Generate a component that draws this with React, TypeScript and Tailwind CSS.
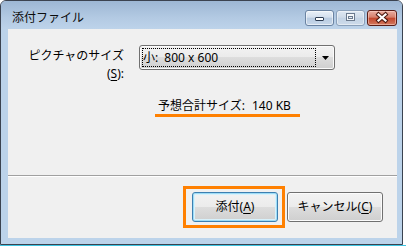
import React from "react";

const FONT = { fontFamily: '"Noto Sans", "Noto Sans CJK JP", sans-serif' };

function MinGlyph() {
  return (
    <svg className="absolute left-[-1px] top-[-1px]" width="29" height="16" viewBox="0 0 29 16">
      <rect x="10.5" y="7.5" width="8" height="3" fill="#ffffff" stroke="#2f3f55" strokeWidth="1" rx="0.5" />
    </svg>
  );
}

function MaxGlyph() {
  return (
    <svg className="absolute left-[-1px] top-[-1px]" width="29" height="16" viewBox="0 0 29 16">
      <rect x="10" y="3" width="9" height="8" fill="#6b7a8e" />
      <rect x="11" y="4" width="7" height="6" fill="#f4f7fa" />
      <rect x="12" y="6" width="5" height="3" fill="#6b7a8e" />
      <rect x="13" y="7" width="3" height="1" fill="#e8eef5" />
    </svg>
  );
}

function CloseGlyph() {
  return (
    <svg className="absolute left-[-1px] top-[-1px]" width="30" height="16" viewBox="0 0 30 16">
      <g strokeLinecap="square">
        <line x1="11.5" y1="4.5" x2="18.5" y2="10.5" stroke="#4a1810" strokeWidth="4.2" />
        <line x1="18.5" y1="4.5" x2="11.5" y2="10.5" stroke="#4a1810" strokeWidth="4.2" />
        <line x1="11.5" y1="4.5" x2="18.5" y2="10.5" stroke="#ffffff" strokeWidth="2.2" />
        <line x1="18.5" y1="4.5" x2="11.5" y2="10.5" stroke="#ffffff" strokeWidth="2.2" />
      </g>
    </svg>
  );
}

export default function App() {
  return (
    <div className="w-[406px] h-[246px] bg-white flex flex-col" style={FONT}>
      <div className="w-[403px] h-[245px] rounded-t-[6px] border border-[#3b4350] bg-[#bcd3ea] flex flex-col overflow-hidden">
        {/* Title bar */}
        <div className="h-[28px] flex items-start bg-[linear-gradient(to_bottom,#9db7d4,#b3cae3_60%,#bdd3ea)]">
          <div className="flex-1 pl-[11px] pt-[9px] text-[12px] leading-[16px] text-[#0b0b0b]">添付ファイル</div>
          <div className="flex gap-[2px] pt-[9px] pr-[5px]">
            <div className="relative w-[29px] h-[16px] rounded-[3px] border border-[#6a83a2] bg-[linear-gradient(to_bottom,#e9f0f8,#d4e0ee_45%,#b8cbe1_50%,#c8d8ea)] shadow-[inset_0_0_0_1px_rgba(255,255,255,0.55)]">
              <MinGlyph />
            </div>
            <div className="relative w-[29px] h-[16px] rounded-[3px] border border-[#8aa0ba] bg-[linear-gradient(to_bottom,#dde7f2,#cfdbe9_45%,#c3d3e5_50%,#cddbea)] shadow-[inset_0_0_0_1px_rgba(255,255,255,0.45)]">
              <MaxGlyph />
            </div>
            <div className="relative w-[30px] h-[16px] rounded-[3px] border border-[#5a1d16] bg-[linear-gradient(to_bottom,#e9ada1,#d67f6b_45%,#c2452b_50%,#d27a60)] shadow-[inset_0_0_0_1px_rgba(255,220,210,0.5)]">
              <CloseGlyph />
            </div>
          </div>
        </div>

        {/* Client area with frame */}
        <div className="flex-1 flex pl-[7px] pr-[5px] pb-[6px]">
          <div className="flex-1 bg-[#f0f0f0] flex flex-col text-[12px] text-black">
            <div className="h-[146px] flex flex-col pt-[16px]">
              <div className="flex items-start">
                <div className="w-[116px] pt-[2px] text-right leading-[18px]">
                  <div>ピクチャのサイズ</div>
                  <div>
                    (<span className="underline underline-offset-[2px]">S</span>):
                  </div>
                </div>
                <div className="ml-[15px] w-[196px] h-[25px] rounded-[3px] border border-[#707070] bg-[linear-gradient(to_bottom,#f2f2f2,#ebebeb_50%,#dddddd_50%,#cfcfcf)] shadow-[inset_0_0_0_1px_#fbfbfb] flex items-center p-[2px]">
                  <div className="w-[174px] h-[19px] border border-dotted border-black flex items-center">
                    <span className="whitespace-nowrap leading-[16px]">
                      小:<span className="pl-[3px]"> 800 x 600</span>
                    </span>
                  </div>
                  <div className="flex-1 flex justify-center pl-[3px]">
                    <svg width="7" height="4" viewBox="0 0 7 4">
                      <path d="M0 0 H7 L3.5 4 Z" fill="#000000" />
                    </svg>
                  </div>
                </div>
              </div>
              <div className="ml-[147px] mt-[15px] w-[145px] pl-[3px] border-b-[3px] border-[#ff8000] leading-[16px] whitespace-nowrap">
                予想合計サイズ:<span className="pl-[4px]"> 140 KB</span>
              </div>
            </div>
            <div className="h-[1px] bg-[#a0a0a0]" />
            <div className="h-[1px] bg-white" />
            <div className="flex-1 flex justify-end items-start pt-[9px] pr-[14px]">
              <div className="w-[102px] h-[42px] border-[3px] border-[#ff8000] pl-[6px] pt-[3px]">
                <div className="w-[86px] h-[30px] rounded-[3px] border border-[#3c7fb1] bg-[linear-gradient(to_bottom,#f2f2f2,#ebebeb_50%,#dddddd_50%,#cfcfcf)] shadow-[inset_0_0_0_1px_#9edcf6,inset_0_0_0_2px_#d8f1fb] flex items-center justify-center leading-[16px]">
                  添付(<span className="underline underline-offset-[2px]">A</span>)
                </div>
              </div>
              <div className="ml-[2px] mt-[6px] w-[96px] h-[30px] rounded-[3px] border border-[#707070] bg-[linear-gradient(to_bottom,#f2f2f2,#ebebeb_50%,#dddddd_50%,#cfcfcf)] shadow-[inset_0_0_0_1px_#fbfbfb] flex items-center justify-center leading-[16px]">
                キャンセル(<span className="underline underline-offset-[2px]">C</span>)
              </div>
            </div>
          </div>
        </div>
      </div>
      <div className="h-[1px] bg-[#3ec4e2]" />
    </div>
  );
}
